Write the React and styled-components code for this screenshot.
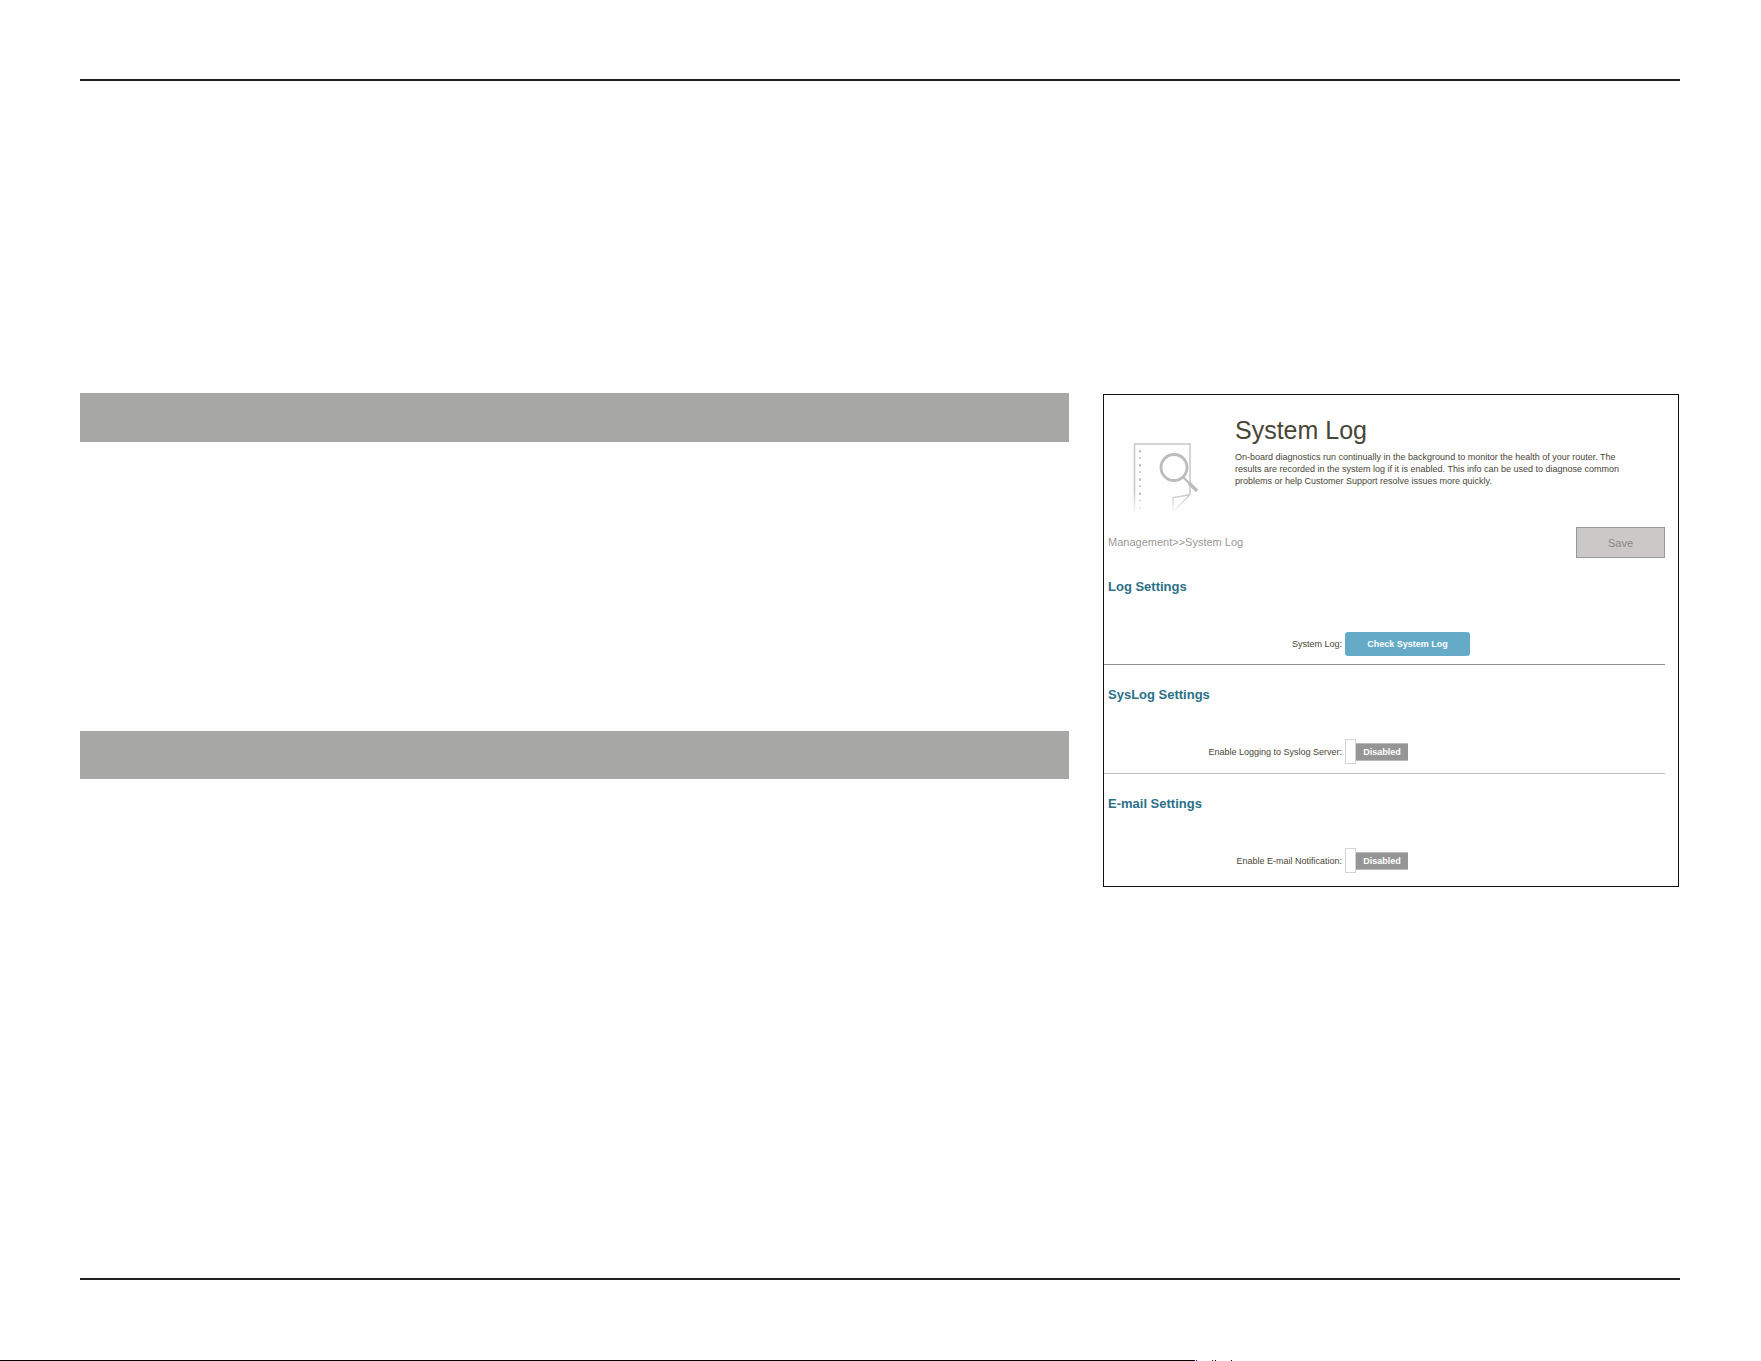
import React from 'react';
import styled, { createGlobalStyle } from 'styled-components';

const color = {
  ink: '#231f20',
  bar: '#a7a7a5',
  text: '#4a4637',
  heading: '#2b7088',
  button: '#65abc7',
  muted: '#9b9995',
  off: '#959595',
};

const GlobalStyle = createGlobalStyle`
  * {
    box-sizing: border-box;
  }

  body {
    margin: 0;
    background: #fefefe;
    font-family: "Liberation Sans", Arial, sans-serif;
  }
`;

const Page = styled.div`
  display: flex;
  flex-direction: column;

  min-height: 100vh;
`;

const Sheet = styled.main`
  display: flex;
  flex-direction: column;
  flex: 1;

  margin: 79px 81px 80px 80px;
  border-top: 2px solid ${color.ink};
  border-bottom: 2px solid ${color.ink};
`;

const Columns = styled.div`
  display: grid;
  grid-template-columns: 989fr 576fr;
  column-gap: 34px;
  align-items: start;

  padding: 312px 1px 0 0;
`;

const Bars = styled.div`
  display: grid;
  row-gap: 289px;
`;

const Bar = styled.div`
  height: ${props => props.$height}px;

  background: ${color.bar};
`;

const Panel = styled.section`
  margin-top: 1px;
  padding: 0 13px 13px 0;

  border: 1px solid #111;
  color: ${color.text};
`;

const Header = styled.header`
  display: flex;

  height: 132px;
`;

const IconBox = styled.div`
  flex: none;

  width: 131px;
  padding: 35px 0 0 16px;

  svg {
    display: block;
  }
`;

const Intro = styled.div`
  flex: 1;

  padding: 20px 24px 0 0;
`;

const Title = styled.h1`
  margin: 0 0 6px;

  line-height: 30px;
  font-size: 25px;
  font-weight: 400;
`;

const Description = styled.p`
  margin: 0;

  line-height: 12px;
  font-size: 9px;
`;

const Toolbar = styled.div`
  display: flex;
  align-items: center;
  justify-content: space-between;

  padding-left: 4px;
`;

const Breadcrumb = styled.nav`
  padding-bottom: 2px;

  font-size: 11px;
  color: ${color.muted};
`;

const Crumb = styled.a`
  color: inherit;
  text-decoration: none;
`;

const SaveButton = styled.button`
  width: 89px;
  height: 31px;
  padding: 0;

  border: 1px solid #97989c;
  background: #cac9c7;
  font-family: inherit;
  font-size: 11px;
  color: #878787;
`;

const Group = styled.section`
  padding: 22px 0 9px;

  border-bottom: 1px solid ${props => props.$line};

  &:first-of-type {
    padding: 21px 0 8px;
  }

  &:last-of-type {
    padding-bottom: 0;
    border-bottom: 0;
  }
`;

const GroupTitle = styled.h2`
  margin: 0 0 36px 4px;

  line-height: 16px;
  font-size: 13px;
  font-weight: 700;
  color: ${color.heading};
`;

const Row = styled.div`
  display: grid;
  grid-template-columns: 238px 1fr;
  column-gap: 3px;
  align-items: center;

  height: 25px;
`;

const Label = styled.label`
  text-align: right;
  font-size: 9px;
`;

const CheckButton = styled.button`
  width: 125px;
  height: 24px;
  padding: 0;

  border: 0;
  border-radius: 3px;
  background: ${color.button};
  font-family: inherit;
  font-size: 9px;
  font-weight: 700;
  color: #fff;
`;

const Toggle = styled.button`
  display: flex;
  align-items: center;

  width: 63px;
  height: 25px;
  padding: 0;

  border: 0;
  background: transparent;
`;

const Knob = styled.span`
  width: 11px;
  height: 25px;

  border: 1px solid #d4d4d4;
  background: #fff;
`;

const ToggleText = styled.span`
  flex: 1;

  height: 18px;

  border-top: 1px solid #bababa;
  border-bottom: 1px solid #bababa;
  background: ${color.off};
  line-height: 16px;
  font-family: "Liberation Sans", Arial, sans-serif;
  font-size: 9px;
  font-weight: 700;
  color: #fff;
`;

const Edge = styled.div`
  display: flex;

  height: 1px;
`;

const EdgeLine = styled.div`
  width: 1194px;

  background: #000;
`;

const dots = [0, 1, 2, 3, 4, 5, 6, 7, 8];

const LogIcon = () => (
  <svg width="90" height="90" viewBox="0 0 90 90" fill="none" aria-hidden="true">
    <defs>
      <linearGradient id="fade" x1="0" y1="0" x2="0" y2="90" gradientUnits="userSpaceOnUse">
        <stop offset="0.7" stopColor="#fff" />
        <stop offset="0.92" stopColor="#000" />
      </linearGradient>
      <mask id="sheetMask" maskUnits="userSpaceOnUse" x="0" y="0" width="90" height="90">
        <rect width="90" height="90" fill="url(#fade)" />
      </mask>
    </defs>
    <g mask="url(#sheetMask)" stroke="#c8c7c5" strokeWidth="1.5">
      <path d="M14.5 84V14H70V64.5L53 82V67.5Q62 66.5 70 64.5" />
      {dots.map(i => (
        <rect
          key={i}
          x="19"
          y={20 + i * 7.1}
          width="2"
          height={i % 2 ? 1.4 : 2.4}
          fill="#bbb"
          stroke="none"
        />
      ))}
    </g>
    <circle cx="54" cy="37.5" r="13" fill="#fefefe" stroke="#bdbcba" strokeWidth="2.8" />
    <path d="M63 47L75 59" stroke="#bdbcba" strokeWidth="2.2" />
    <path d="M69 53L77 61" stroke="#bdbcba" strokeWidth="3.4" />
  </svg>
);

// small marks that trail the bottom line
const EdgeMarks = () => (
  <svg width="40" height="1" viewBox="0 0 40 1" aria-hidden="true">
    <rect x="0" width="1" height="1" fill="#00f" />
    <rect x="2" width="1" height="1" fill="#a00020" />
    <rect x="3" width="1" height="1" fill="#8ff" />
    <rect x="18" width="1" height="1" fill="#a00020" />
    <rect x="19" width="1" height="1" fill="#8ff" />
    <rect x="21" width="1" height="1" fill="#000" />
    <rect x="37" width="1" height="1" fill="#000" />
  </svg>
);

const Switch = ({ id }) => (
  <Toggle id={id} type="button" role="switch" aria-checked="false">
    <Knob />
    <ToggleText>Disabled</ToggleText>
  </Toggle>
);

const App = () => {
  return (
    <Page>
      <GlobalStyle />
      <Sheet>
        <Columns>
          <Bars>
            <Bar $height={49} />
            <Bar $height={48} />
          </Bars>
          <Panel>
            <Header>
              <IconBox>
                <LogIcon />
              </IconBox>
              <Intro>
                <Title>System Log</Title>
                <Description>
                  On-board diagnostics run continually in the background to monitor the health of your router. The
                  results are recorded in the system log if it is enabled. This info can be used to diagnose common
                  problems or help Customer Support resolve issues more quickly.
                </Description>
              </Intro>
            </Header>
            <Toolbar>
              <Breadcrumb>
                <Crumb href="#management">Management</Crumb>
                &gt;&gt;
                <Crumb href="#system-log">System Log</Crumb>
              </Breadcrumb>
              <SaveButton type="button">Save</SaveButton>
            </Toolbar>
            <Group $line="#8e8e8e">
              <GroupTitle>Log Settings</GroupTitle>
              <Row>
                <Label htmlFor="check-log">System Log:</Label>
                <CheckButton id="check-log" type="button">Check System Log</CheckButton>
              </Row>
            </Group>
            <Group $line="#bfbfbf">
              <GroupTitle>SysLog Settings</GroupTitle>
              <Row>
                <Label htmlFor="syslog">Enable Logging to Syslog Server:</Label>
                <Switch id="syslog" />
              </Row>
            </Group>
            <Group>
              <GroupTitle>E-mail Settings</GroupTitle>
              <Row>
                <Label htmlFor="email">Enable E-mail Notification:</Label>
                <Switch id="email" />
              </Row>
            </Group>
          </Panel>
        </Columns>
      </Sheet>
      <Edge>
        <EdgeLine />
        <EdgeMarks />
      </Edge>
    </Page>
  );
};

export default App;
